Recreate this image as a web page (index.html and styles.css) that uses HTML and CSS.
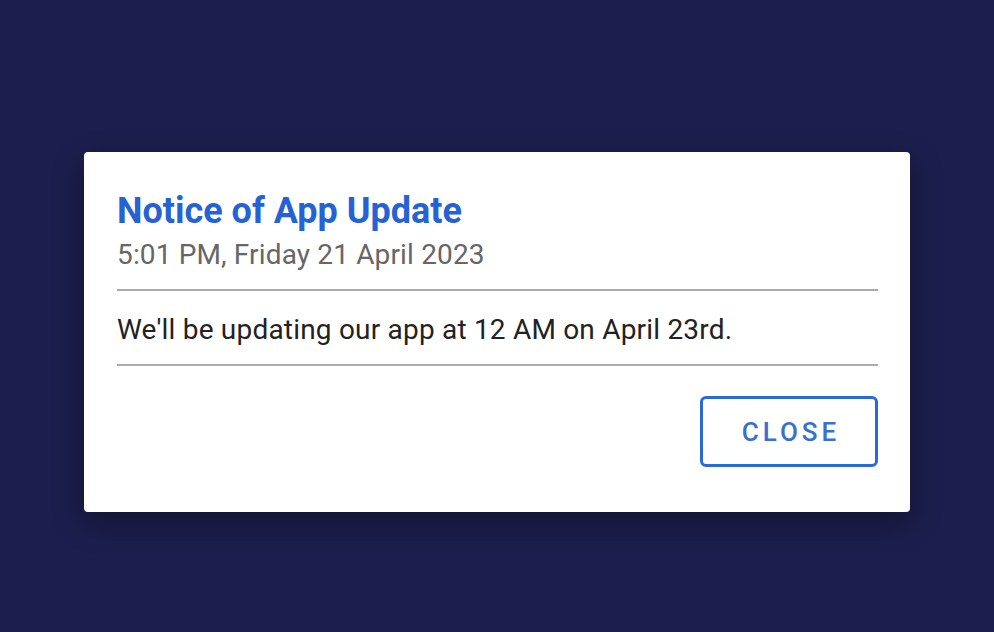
FILE: index.html
```html
<!DOCTYPE html>
<html lang="en">
<head>
    <meta charset="UTF-8">
    <meta name="viewport" content="width=device-width, initial-scale=1.0">
    <title>Notice of App Update</title>
    <link rel="stylesheet" href="styles.css">
</head>
<body>

    <div class="overlay">
        <div class="dialog">
            <h1 class="dialog-title">Notice of App Update</h1>
            <div class="dialog-date">5:01 PM, Friday 21 April 2023</div>
            <hr class="divider">
            <p class="dialog-text">We'll be updating our app at 12 AM on April 23rd.</p>
            <hr class="divider">
            <div class="dialog-actions">
                <button class="btn-close">CLOSE</button>
            </div>
        </div>
    </div>

</body>
</html>
```

FILE: styles.css
```css
body {
    font-family: Roboto, Arial, sans-serif;
    margin: 0;
    background-color: #1c1e4d;
}
.overlay {
    height: 632px;
    padding: 152px 84px 0 84px;
    box-sizing: border-box;
}
.dialog {
    width: 826px;
    height: 360px;
    box-sizing: border-box;
    background-color: white;
    border-radius: 4px;
    padding: 38px 32px 0 33px;
    box-shadow: 0 10px 30px rgba(0,0,0,0.35);
}
.dialog-title {
    margin: 0;
    font-size: 36px;
    font-weight: 700;
    color: #2563d4;
    line-height: 42px;
}
.dialog-date {
    font-size: 28px;
    color: #666;
    line-height: 34px;
    margin-top: 6px;
    letter-spacing: 0.15px;
}
.divider {
    border: none;
    border-top: 2px solid #ababab;
    margin: 17px 0 0 0;
}
.dialog-text {
    margin: 0;
    padding-top: 22px;
    font-size: 28px;
    color: #222;
    line-height: 34px;
    letter-spacing: 0.2px;
}
.dialog-actions {
    display: flex;
    justify-content: flex-end;
    padding-top: 30px;
}
.btn-close {
    width: 178px;
    height: 71px;
    background-color: white;
    border: 3px solid #2c69d8;
    border-radius: 6px;
    color: #3a6fce;
    font-family: Roboto, Arial, sans-serif;
    font-size: 26px;
    font-weight: 500;
    letter-spacing: 4px;
    padding-left: 10px;
    cursor: pointer;
}
```
